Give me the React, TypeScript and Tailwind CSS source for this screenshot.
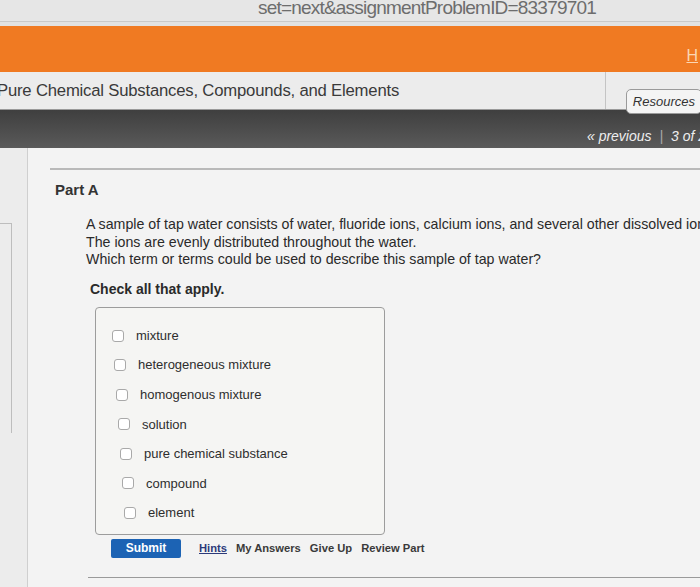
import React from 'react';

const options = [
  'mixture',
  'heterogeneous mixture',
  'homogenous mixture',
  'solution',
  'pure chemical substance',
  'compound',
  'element',
];

const App: React.FC = () => {
  return <div className="w-[700px] h-[587px] overflow-hidden bg-[#efefef] font-['Liberation_Sans',Arial,sans-serif] text-[#2b2b2b]">
      {/* address bar */}
      <div className="h-[22px] bg-[#e6e6e6] border-b border-[#c9c9c9] overflow-hidden relative">
        <div className="absolute left-[258px] top-[-6px] text-[19px] tracking-[-0.8px] text-[#6d6d6d] whitespace-nowrap">
          set=next&amp;assignmentProblemID=83379701
        </div>
      </div>
      <div className="h-[4px] bg-[#e2e2e2]" />
      {/* orange header */}
      <div className="h-[46px] bg-[#f07a22] flex items-end justify-end pb-[8px] pr-[2px]">
        <span className="text-[16px] text-[#fbd6b3] underline leading-none">H</span>
      </div>
      {/* title bar */}
      <div className="h-[38px] bg-[#ececec] border-b border-[#9a9a9a] flex items-stretch">
        <div className="flex-1 min-w-0 flex items-center -ml-[3px]">
          <h1 className="text-[16.7px] text-[#3a3a3a] tracking-[-0.2px] whitespace-nowrap">Pure Chemical Substances, Compounds, and Elements</h1>
        </div>
        <div className="w-[95px] shrink-0 border-l border-[#c4c4c4] flex items-end justify-end">
          <div className="translate-y-[5px] border border-[#9a9a9a] rounded-[5px] bg-[#f4f4f4] px-[6px] py-[2px] text-[13px] italic text-[#333] -mr-[2px]">
            Resources
          </div>
        </div>
      </div>
      {/* dark nav bar */}
      <div className="h-[38px] bg-gradient-to-b from-[#3f3f3f] to-[#5a5a5a] flex items-end justify-end pb-[1px] shadow-[0_2px_2px_rgba(0,0,0,0.35)]">
        <span className="text-[14px] italic text-[#eeeeee] whitespace-nowrap -mr-[6px]">
          « previous <span className="text-[#aaa] mx-[4px]">|</span> 3 of 2
        </span>
      </div>
      {/* content */}
      <div className="flex">
        <div className="w-[28px] shrink-0 h-[439px] bg-[#ececec] border-r border-[#cfcfcf] flex flex-col">
          <div className="mt-[75px] h-[210px] border-t border-r border-[#bdbdbd] w-[12px]" />
        </div>
        <div className="flex-1 min-w-0 bg-[#f3f3f3] pl-[22px]">
          <div className="mt-[20px] border-t-2 border-[#b9b9b9]" />
          <h2 className="mt-[11px] ml-[5px] text-[15px] font-bold text-[#333] leading-[18px]">Part A</h2>
          <div className="ml-[36px] mt-[17px] text-[14.2px] leading-[17.5px] text-[#2a2a2a] whitespace-nowrap">
            <p>A sample of tap water consists of water, fluoride ions, calcium ions, and several other dissolved ions.</p>
            <p>The ions are evenly distributed throughout the water.</p>
            <p>Which term or terms could be used to describe this sample of tap water?</p>
          </div>
          <p className="ml-[40px] mt-[10px] text-[14px] font-bold text-[#2a2a2a]">Check all that apply.</p>
          <div className="ml-[45px] mt-[7px] w-[290px] h-[228px] border border-[#9c9c9c] rounded-[4px] bg-[#f5f5f3] pt-[19px] pl-[16px] flex flex-col gap-[11.6px]">
            {options.map((o, i) => <label key={o} className="flex items-center gap-[12px] h-[18px]" style={{
            marginLeft: i * 2
          }}>
                <span className="w-[12px] h-[12px] border border-[#a9a9a9] rounded-[3px] bg-white shrink-0" />
                <span className="text-[13px] text-[#2e2e2e]">{o}</span>
              </label>)}
          </div>
          <div className="ml-[61px] mt-[4px] flex items-center gap-[18px]">
            <button className="w-[70px] h-[19px] bg-[#1c63b4] rounded-[2px] text-white text-[12px] font-bold">Submit</button>
            <div className="flex items-center gap-[9px] text-[11.2px] font-bold text-[#3a3a3a]">
              <a className="underline text-[#2c3a7a]">Hints</a>
              <a>My Answers</a>
              <a>Give Up</a>
              <a>Review Part</a>
            </div>
          </div>
          <div className="mt-[19px] ml-[38px] border-t border-[#9a9a9a]" />
        </div>
      </div>
    </div>;
};

export default App;
